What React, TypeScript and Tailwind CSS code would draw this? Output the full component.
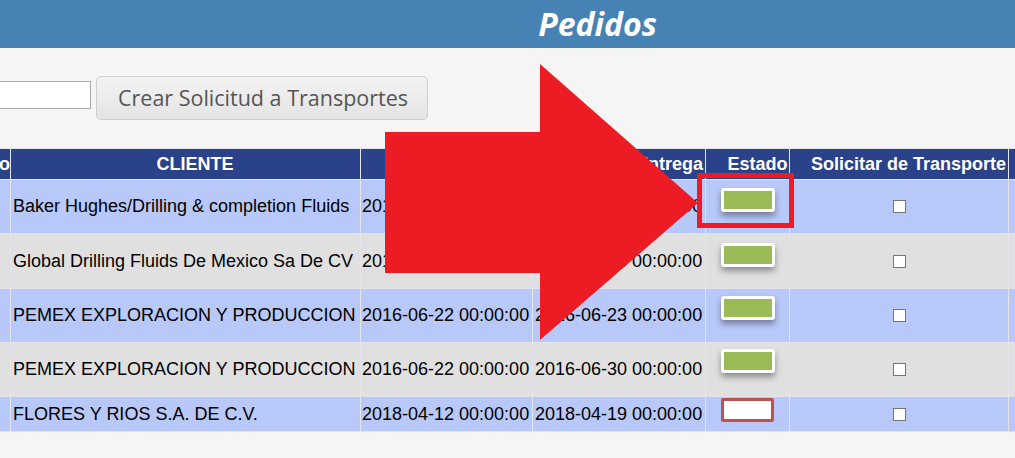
import React from 'react';

type Row = {
  cliente: string;
  fecha: string;
  entrega: string;
  estado: 'ok' | 'pendiente';
  h: string;
  pt: string;
  bg: string;
};

const BLUE = 'bg-[#b8c8f8]';
const GRAY = 'bg-[#e1e0e0]';

const rows: Row[] = [
  { cliente: 'Baker Hughes/Drilling & completion Fluids', fecha: '2016-06-21 00:00:00', entrega: '2016-06-22 00:00:00', estado: 'ok', h: 'h-[53px]', pt: 'pt-[8px]', bg: BLUE },
  { cliente: 'Global Drilling Fluids De Mexico Sa De CV', fecha: '2016-06-21 00:00:00', entrega: '2016-06-23 00:00:00', estado: 'ok', h: 'h-[54px]', pt: 'pt-[9px]', bg: GRAY },
  { cliente: 'PEMEX EXPLORACION Y PRODUCCION', fecha: '2016-06-22 00:00:00', entrega: '2016-06-23 00:00:00', estado: 'ok', h: 'h-[53px]', pt: 'pt-[7px]', bg: BLUE },
  { cliente: 'PEMEX EXPLORACION Y PRODUCCION', fecha: '2016-06-22 00:00:00', entrega: '2016-06-30 00:00:00', estado: 'ok', h: 'h-[53px]', pt: 'pt-[6px]', bg: GRAY },
  { cliente: 'FLORES Y RIOS S.A. DE C.V.', fecha: '2018-04-12 00:00:00', entrega: '2018-04-19 00:00:00', estado: 'pendiente', h: 'h-[34px]', pt: 'pt-px', bg: BLUE },
];

const EstadoBox = ({ estado }: { estado: Row['estado'] }) =>
  estado === 'ok' ? (
    <div className="w-[54px] h-[24px] rounded-[3px] border-[3px] border-white bg-[#9bbb59] shadow-[0_4px_6px_rgba(0,0,0,0.38)]" />
  ) : (
    <div className="w-[53px] h-[24px] rounded-[2px] border-[3px] border-[#c0504d] bg-white" />
  );

const Checkbox = () => (
  <div className="w-[13px] h-[13px] border border-[#767676] bg-white" />
);

const App = () => {
  const cell = 'flex items-center overflow-hidden whitespace-nowrap text-[18px] text-black';
  const th = 'h-[30px] bg-[#2a4289] text-white font-bold text-[18px] flex items-center overflow-hidden whitespace-nowrap';

  return (
    <div
      className="relative w-[1015px] h-[458px] overflow-hidden bg-[#f5f5f5]"
      style={{ fontFamily: '"Liberation Sans", Arial, sans-serif' }}
    >
      <div className="h-[48px] bg-[#4682b4] flex items-center justify-center pl-[180px]">
        <h1
          className="text-white text-[32px] font-bold italic leading-none"
          style={{ fontFamily: '"Open Sans", sans-serif' }}
        >
          Pedidos
        </h1>
      </div>

      <div className="flex items-start gap-[5px] pt-[28px] ml-[-30px]">
        <input
          className="mt-[5px] w-[121px] h-[28px] border border-[#aaaaaa] bg-white outline-none"
          type="text"
        />
        <button
          className="w-[332px] h-[44px] rounded-[5px] border border-[#cfcfcf] bg-gradient-to-b from-[#f3f3f3] to-[#e4e4e4] text-[#555555] text-[21.5px] text-left pl-[21px]"
          style={{ fontFamily: '"Open Sans", sans-serif' }}
        >
          Crear Solicitud a Transportes
        </button>
      </div>

      <div className="mt-[28px] pt-px pb-px bg-[#e4e4ec] grid grid-cols-[10px_349px_171px_172px_83px_218px_1fr] gap-px">
        <div className={`${th} justify-end`}>Pedido</div>
        <div className={`${th} justify-center pl-[19px]`}>CLIENTE</div>
        <div className={`${th} justify-center pl-[19px]`}>Fecha Pedido</div>
        <div className={`${th} justify-end pr-[2px]`}>Fecha de Entrega</div>
        <div className={`${th} justify-center pl-[20px]`}>Estado</div>
        <div className={`${th} justify-center pl-[19px]`}>Solicitar de Transporte</div>
        <div className={th} />

        {rows.map((r, i) => (
          <React.Fragment key={i}>
            <div className={`${r.h} ${r.bg}`} />
            <div className={`${r.h} ${r.bg} ${cell} pl-[2px]`}>{r.cliente}</div>
            <div className={`${r.h} ${r.bg} ${cell} pl-[1px]`}>{r.fecha}</div>
            <div className={`${r.h} ${r.bg} ${cell} pl-[2px]`}>{r.entrega}</div>
            <div className={`${r.h} ${r.bg} flex justify-center items-start ${r.pt}`}>
              <EstadoBox estado={r.estado} />
            </div>
            <div className={`${r.h} ${r.bg} flex items-center justify-center`}>
              <Checkbox />
            </div>
            <div className={`${r.h} ${r.bg}`} />
          </React.Fragment>
        ))}
      </div>

      {/* callout arrow + highlight over Estado */}
      <svg className="absolute left-0 top-0 pointer-events-none" width="1015" height="458">
        <polygon
          points="385,132 540,132 540,64 698,203 540,340 540,273 385,273"
          fill="#ed1c24"
        />
      </svg>
      <div className="absolute left-[697px] top-[173px] w-[97px] h-[55px] border-[5px] border-[#ed1c24]" />
    </div>
  );
};

export default App;
